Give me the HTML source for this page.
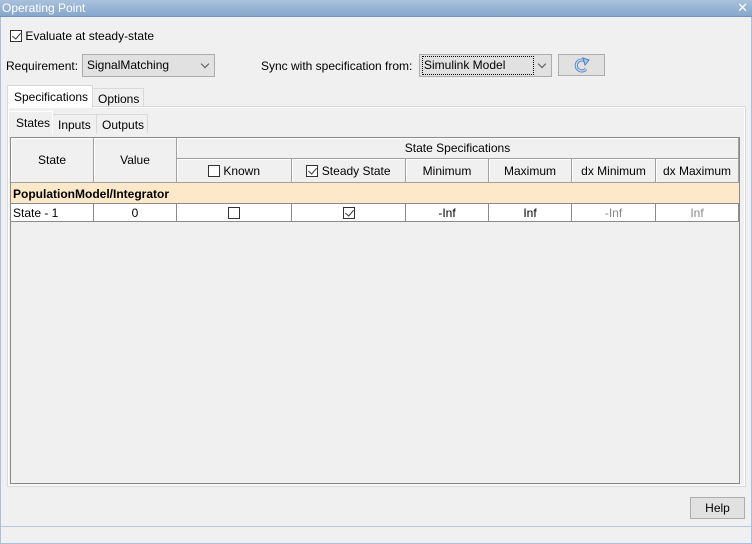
<!DOCTYPE html><html><head><style>
*{box-sizing:border-box;margin:0;padding:0}
body{width:752px;height:544px;background:#f0f0f0;font-family:"Liberation Sans",sans-serif;font-size:12px;color:#000;position:relative;overflow:hidden}
.a{position:absolute}
.title{left:0;top:0;width:752px;height:17px;background:linear-gradient(#a9c1dc,#86a7cc);color:#fff;font-size:12px;line-height:16px;padding-left:2px;border-bottom:1px solid #6f93bd}
.cb{display:inline-block;width:12px;height:12px;border:1px solid #333;background:#fff;vertical-align:-2px;position:relative}
.cb.c::after{content:"";position:absolute;left:3px;top:0px;width:4px;height:7px;border:solid #333;border-width:0 1px 1px 0;transform:rotate(40deg)}
.combo{background:#e1e1e1;border:1px solid #adadad;height:23px;line-height:20px;padding-left:4px}
.combo .ar{position:absolute;right:6px;top:6px;width:6px;height:6px;border:solid #555;border-width:0 1px 1px 0;transform:rotate(45deg)}
.cell{position:absolute;border-right:1px solid #8a8a8a;border-bottom:1px solid #8a8a8a;text-align:center}
.h{background:#f0f0f0;border-right:1px solid #a0a0a0;border-bottom:1px solid #a0a0a0;box-shadow:inset 1px 1px #fff}
.d{background:#fff;line-height:19px}
</style></head><body>
<div class="a title">Operating Point<span style="position:absolute;right:4px;top:0;font-size:13px">✕</span></div>
<div class="a" style="left:0;top:17px;width:1px;height:527px;background:#a9c1dc"></div>
<div class="a" style="right:0;top:17px;width:1px;height:527px;background:#a9c1dc"></div>
<div class="a" style="left:0;bottom:0;width:752px;height:1px;background:#a9c1dc"></div>
<div class="a" style="left:10px;top:29px"><span class="cb c"></span> Evaluate at steady-state</div>
<div class="a" style="left:6px;top:59px">Requirement:</div>
<div class="a combo" style="left:82px;top:54px;width:133px">SignalMatching<span class="ar"></span></div>
<div class="a" style="left:261px;top:59px">Sync with specification from:</div>
<div class="a combo" style="left:419px;top:54px;width:133px;padding-left:3px"><span style="display:inline-block;width:110px;height:17px;line-height:16px;margin-top:1px;outline:1px dotted #000;padding-left:1px">Simulink Model</span><span class="ar"></span></div>
<div class="a" style="left:558px;top:54px;width:47px;height:22px;background:#e1e1e1;border:1px solid #adadad;text-align:center">
<svg width="22" height="18" viewBox="0 0 22 18" style="margin-top:1px"><path d="M14 5 A5.5 5.5 0 1 0 15 13" fill="none" stroke="#5c8cc4" stroke-width="3.2"/><path d="M14 5 A5.5 5.5 0 1 0 15 13" fill="none" stroke="#c9dcf0" stroke-width="1.2"/><path d="M12 2 L18 4 L14 9 Z" fill="#a8c8ec" stroke="#4f7fb8"/></svg></div>
<div class="a" style="left:7px;top:106px;width:739px;height:381px;background:#fff;border:1px solid #d9d9d9"></div>
<div class="a" style="left:9px;top:108px;width:735px;height:377px;background:#f0f0f0"></div>
<div class="a" style="left:92px;top:88px;width:52px;height:19px;border:1px solid #d9d9d9;border-bottom:none;padding:3px 0 0 5px">Options</div>
<div class="a" style="left:7px;top:85px;width:86px;height:23px;background:#fff;border:1px solid #d9d9d9;border-bottom:none;padding:4px 0 0 6px">Specifications</div>
<div class="a" style="left:52px;top:114px;width:45px;height:19px;border:1px solid #d9d9d9;border-bottom:none;padding:3px 0 0 5px">Inputs</div>
<div class="a" style="left:96px;top:114px;width:52px;height:19px;border:1px solid #d9d9d9;border-bottom:none;padding:3px 0 0 5px">Outputs</div>
<div class="a" style="left:8px;top:111px;width:45px;height:23px;background:#f0f0f0;border:1px solid #fff;border-bottom:none;padding:4px 0 0 7px">States</div>
<div class="a" style="left:10px;top:137px;width:730px;height:347px;border:1px solid #8a8a8a;background:#f0f0f0"></div>
<div class="cell h" style="left:11px;top:138px;width:83px;height:45px;line-height:44px">State</div>
<div class="cell h" style="left:94px;top:138px;width:83px;height:45px;line-height:44px">Value</div>
<div class="cell h" style="left:177px;top:138px;width:562px;height:21px;line-height:21px">State Specifications</div>
<div class="cell h" style="left:177px;top:159px;width:115px;height:24px;line-height:25px"><span class="cb"></span> Known</div>
<div class="cell h" style="left:292px;top:159px;width:114px;height:24px;line-height:25px"><span class="cb c"></span> Steady State</div>
<div class="cell h" style="left:406px;top:159px;width:83px;height:24px;line-height:25px">Minimum</div>
<div class="cell h" style="left:489px;top:159px;width:83px;height:24px;line-height:25px">Maximum</div>
<div class="cell h" style="left:572px;top:159px;width:84px;height:24px;line-height:25px">dx Minimum</div>
<div class="cell h" style="left:656px;top:159px;width:83px;height:24px;line-height:25px">dx Maximum</div>
<div class="a" style="left:11px;top:183px;width:728px;height:21px;background:#fde9c9;border-bottom:1px solid #8a8a8a;font-weight:bold;line-height:22px;padding-left:2px">PopulationModel/Integrator</div>
<div class="cell d" style="left:11px;top:204px;width:83px;height:18px;text-align:left;padding-left:2px">State - 1</div>
<div class="cell d" style="left:94px;top:204px;width:83px;height:18px">0</div>
<div class="cell d" style="left:177px;top:204px;width:115px;height:18px"><span class="cb"></span></div>
<div class="cell d" style="left:292px;top:204px;width:114px;height:18px"><span class="cb c"></span></div>
<div class="cell d" style="left:406px;top:204px;width:83px;height:18px">-Inf</div>
<div class="cell d" style="left:489px;top:204px;width:83px;height:18px">Inf</div>
<div class="cell d" style="left:572px;top:204px;width:84px;height:18px;color:#888">-Inf</div>
<div class="cell d" style="left:656px;top:204px;width:83px;height:18px;color:#888">Inf</div>
<div class="a" style="left:690px;top:497px;width:55px;height:22px;background:#e1e1e1;border:1px solid #adadad;text-align:center;line-height:20px">Help</div>
<div class="a" style="left:1px;top:526px;width:750px;height:1px;background:#b9c9da"></div>
</body></html>
